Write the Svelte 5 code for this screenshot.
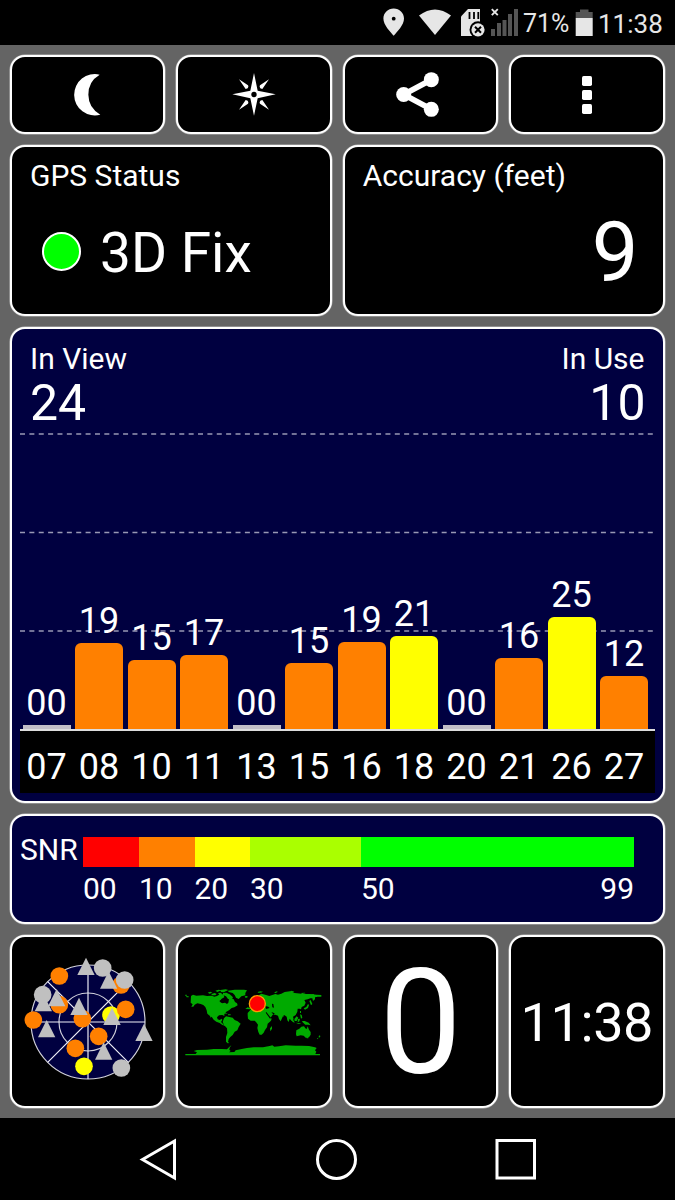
<script lang="ts">
  type Satellite = { id: string; snr: string; height: number; color: string };
  type Marker = { x: number; y: number; color: string; shape: 'circle' | 'triangle' };

  const ORANGE = '#ff8000';
  const YELLOW = '#ffff00';
  const GRAY = '#c0c0c0';

  const satellites: Satellite[] = [
    { id: '07', snr: '00', height: 4.5, color: '#c2bec6' },
    { id: '08', snr: '19', height: 86, color: ORANGE },
    { id: '10', snr: '15', height: 69, color: ORANGE },
    { id: '11', snr: '17', height: 74.5, color: ORANGE },
    { id: '13', snr: '00', height: 4.5, color: '#c2bec6' },
    { id: '15', snr: '15', height: 66, color: ORANGE },
    { id: '16', snr: '19', height: 87, color: ORANGE },
    { id: '18', snr: '21', height: 93.5, color: YELLOW },
    { id: '20', snr: '00', height: 4.5, color: '#c2bec6' },
    { id: '21', snr: '16', height: 71, color: ORANGE },
    { id: '26', snr: '25', height: 112, color: YELLOW },
    { id: '27', snr: '12', height: 53, color: ORANGE }
  ];

  const snrScale = [
    { label: '00', width: 56, color: '#ff0000' },
    { label: '10', width: 55.5, color: ORANGE },
    { label: '20', width: 55.5, color: YELLOW },
    { label: '30', width: 111, color: '#aaff00' },
    { label: '50', width: 273, color: '#00ff00' }
  ];

  // Drawn in order, later markers cover earlier ones
  const markers: Marker[] = [
    { x: 177, y: 139, color: ORANGE, shape: 'circle' },
    { x: 362, y: 166, color: ORANGE, shape: 'circle' },
    { x: 177, y: 225, color: ORANGE, shape: 'circle' },
    { x: 99, y: 271, color: ORANGE, shape: 'circle' },
    { x: 246, y: 267, color: ORANGE, shape: 'circle' },
    { x: 332, y: 256, color: YELLOW, shape: 'circle' },
    { x: 376, y: 239, color: ORANGE, shape: 'circle' },
    { x: 295, y: 320, color: ORANGE, shape: 'circle' },
    { x: 225, y: 356, color: ORANGE, shape: 'circle' },
    { x: 251, y: 410, color: YELLOW, shape: 'circle' },
    { x: 257, y: 111, color: GRAY, shape: 'triangle' },
    { x: 307, y: 115, color: GRAY, shape: 'circle' },
    { x: 325, y: 152, color: GRAY, shape: 'triangle' },
    { x: 373, y: 151, color: GRAY, shape: 'circle' },
    { x: 129, y: 220, color: GRAY, shape: 'triangle' },
    { x: 127, y: 195, color: GRAY, shape: 'circle' },
    { x: 169, y: 205, color: GRAY, shape: 'triangle' },
    { x: 236, y: 231, color: GRAY, shape: 'triangle' },
    { x: 335, y: 261, color: GRAY, shape: 'triangle' },
    { x: 139, y: 298, color: GRAY, shape: 'triangle' },
    { x: 310, y: 365, color: GRAY, shape: 'triangle' },
    { x: 431, y: 309, color: GRAY, shape: 'triangle' },
    { x: 363, y: 415, color: GRAY, shape: 'circle' }
  ];
</script>

<div class="screen">
  <header class="status-bar">
    <svg class="pin" width="22" height="45" viewBox="383 0 22 45">
      <path d="M393.7 8.5c-5.8 0-10.3 4.4-10.3 10.1 0 6.6 7 13.4 10.3 17.2 3.3-3.8 10.3-10.6 10.3-17.2 0-5.7-4.5-10.1-10.3-10.1z" fill="#e6e6e6" />
      <circle cx="393.7" cy="18.7" r="1.9" fill="#000" />
    </svg>
    <svg class="wifi" width="34" height="45" viewBox="418 0 34 45">
      <path d="M419 15.5Q435 3.5 451 15.5L435 35z" fill="#e6e6e6" />
    </svg>
    <svg class="card" width="26" height="45" viewBox="460 0 26 45">
      <path d="M468 9h12v27h-19V16.5z" fill="#e6e6e6" />
      <path d="M469.5 12v7M474 12v7M478.3 12v7" stroke="#000" stroke-width="1.8" />
      <circle cx="478" cy="29.8" r="8.5" fill="#000" />
      <circle cx="478" cy="29.8" r="6.6" fill="#e6e6e6" />
      <path d="M475 26.8l6 6M481 26.8l-6 6" stroke="#000" stroke-width="2" />
    </svg>
    <svg class="signal" width="29" height="45" viewBox="490 0 29 45">
      <path d="M491 29h4v7h-4zM497 23h4v13h-4zM502.5 20h4v16h-4zM508 14h4v22h-4zM514 9h4v27h-4z" fill="#555" />
      <path d="M491.8 9.2l6 6M497.8 9.2l-6 6" stroke="#e6e6e6" stroke-width="1.9" />
    </svg>
    <span class="percent">71%</span>
    <svg class="battery" width="18" height="45" viewBox="575 0 18 45">
      <path d="M580 9.5h8.5V12h4.2v6h-17v-6h4.3z" fill="#555" />
      <path d="M575.7 18h17v18h-17z" fill="#e6e6e6" />
    </svg>
    <span class="clock">11:38</span>
  </header>

  <main>
    <div class="row four">
      <button class="panel tile" aria-label="Night mode">
        <svg width="50" height="50" viewBox="188 75 150 150">
          <path d="M298 89A62 62 0 1 0 300 209A69 69 0 0 1 298 89z" fill="#fff" />
        </svg>
      </button>
      <button class="panel tile" aria-label="Compass">
        <svg width="50" height="50" viewBox="687 75 150 150">
          <path d="M762 84L773 137L827 148L773 160L762 212L751 160L697 148L751 137z" fill="#fff" />
          <path d="M717 103L744 121Q748 130 737 132zM807 103L780 121Q776 130 787 132zM717 194L744 176Q748 167 737 165zM807 194L780 176Q776 167 787 165z" fill="#fff" />
          <circle cx="762" cy="148.5" r="8" fill="#000" />
        </svg>
      </button>
      <button class="panel tile" aria-label="Share">
        <svg width="50" height="50" viewBox="181 75 150 150">
          <path d="M290 104L207 148.5L290 193" fill="none" stroke="#fff" stroke-width="17" />
          <circle cx="207" cy="148.5" r="22.5" fill="#fff" />
          <circle cx="290" cy="104" r="22.5" fill="#fff" />
          <circle cx="290" cy="193" r="22.5" fill="#fff" />
        </svg>
      </button>
      <button class="panel tile" aria-label="Menu">
        <svg width="50" height="50" viewBox="681 75 150 150" fill="#fff">
          <rect x="741" y="93" width="30" height="30" rx="5" />
          <rect x="741" y="135" width="30" height="30" rx="5" />
          <rect x="741" y="177" width="30" height="30" rx="5" />
        </svg>
      </button>
    </div>

    <div class="row two">
      <section class="panel card-panel">
        <h2>GPS Status</h2>
        <div class="fix">
          <span class="led"></span>
          <span>3D Fix</span>
        </div>
      </section>
      <section class="panel card-panel">
        <h2>Accuracy (feet)</h2>
        <div class="accuracy">9</div>
      </section>
    </div>

    <section class="panel navy chart">
      <svg class="grid" width="634" height="200" viewBox="0 0 634 200">
        {#each [1, 99.5, 198] as y}
          <line x1="0" x2="633" y1={y} y2={y} />
        {/each}
      </svg>
      <div class="counts">
        <div>
          <h2>In View</h2>
          <div class="count">24</div>
        </div>
        <div class="right">
          <h2>In Use</h2>
          <div class="count">10</div>
        </div>
      </div>
      <div class="bars">
        {#each satellites as sat}
          <div class="bar-column">
            <span>{sat.snr}</span>
            <div
              class="bar"
              class:flat={sat.snr === '00'}
              style="height: {sat.height}px; background: {sat.color}"
            ></div>
          </div>
        {/each}
      </div>
      <div class="ids">
        {#each satellites as sat}
          <span>{sat.id}</span>
        {/each}
      </div>
    </section>

    <section class="panel navy snr">
      <span class="snr-title">SNR</span>
      <div class="scale">
        {#each snrScale as step}
          <div style="width: {step.width}px">
            <div class="swatch" style="background: {step.color}"></div>
            <span>{step.label}</span>
          </div>
        {/each}
        <span class="scale-end">99</span>
      </div>
    </section>

    <div class="row four">
      <section class="panel tile">
        <svg width="120" height="120" viewBox="83 97 360 360">
          <g fill="none" stroke="#d2d2dc" stroke-width="3.5">
            <circle cx="263" cy="277" r="171" fill="#000040" />
            <circle cx="263" cy="277" r="87" />
          </g>
          <path d="M263 106V448M92 277H434M142 156L384 398M142 398L384 156" stroke="#f0f0f8" stroke-width="3.5" />
          {#each markers as m}
            {#if m.shape === 'circle'}
              <circle cx={m.x} cy={m.y} r="26.5" fill={m.color} />
            {:else}
              <path d="M{m.x} {m.y - 27}l26 52h-52z" fill={m.color} />
            {/if}
          {/each}
        </svg>
      </section>
      <section class="panel tile">
        <svg width="136" height="68" viewBox="34 175 408 204">
          <g fill="#00aa00">
            <path d="M32 195h4v4h-4zM34 199l8 1v3h-6zM49 199l6-4 10 3 20-1 12 2 14-1 8 3 8-2 6-4 4-4 10 4 2 8-8 4-4 8 6 6 8-2 6 4 4-4 2-10 6-4 8 4 4 8 6 4 2 6-10 6-8 2-8 7-8 4-6 7 0 6-6-3-10 1-6 6 2 6 6 2 6-4 2 4-4 6 4 4 4 4 6 0-2 3-8-2-8-6-10-4-8-6-6-9-3 3-2-5-8-7-2-10-4-10-6-6-8-3-10-2-8 4-4 6-6 0 4-7-6-5z" />
            <path d="M99 189l8-3 6 3-8 3zM110 193l10-3 6 3-4 4-10 0zM122 183l10-3 8 2-12 5zM137 181l16-2 8 2-14 7-8-1zM130 190l8-1 4 4-8 2zM145 190l10-1 10 5 10 9-5 8-10-3-6-8-9-4z" />
            <path d="M160 183l20-3 28 0 9 2-5 8 0 7-12 3-8 8-8-4-4-8-6-6-12-3zM210 200l8-1 1 4-6 2zM174 217l6 5-8 1zM141 247l12 2 6 4-12-2zM160 254h8v3h-8z" />
            <path d="M148 266l6-6 10 2 10 2 6 7 9 4 9 7-6 10-4 10-8 4-6 10-7 6-5 6-2 9 4 3-5 1-5-5 0-14 4-12-1-14-9-10-4-9z" />
            <path d="M219 250l8-9 22-2 6 7 8 1 12 0 6 12 10 8-2 6-10 9-2 11-6 8-4 8-6 6-6 0-4-8-3-12 2-10-6-8-4-4-12 0-8-6-1-10zM286 296l6-7 0 8-5 8z" />
            <path d="M228 239l0-10 7-2-2-10 5-6 9-3 5-11 8-5 14 4 10 3 18-6 8 2 10-3 10-5 16-2 14 5 28 3 18 0 20 2 14 1v5h-11l-8 2 0 6-6 5-2-8-6 0-8 3-10 2 4 8-4 9-8 4-2 7-4-2-6 0-1 9-5 10-8 5 2 8-6 5-6-7-3 10-4-5-2-11-6-4-4 0-4 9-4 9-5-7-3-10-8-3-8 0-4 6-9 8-10 4-8-14-4-5-8-4 2-6-10-1-4-7-6-1-2 6-6-6-6-2-7 5z" />
            <path d="M235 210l4-6 4 9-1 6-6 1zM249 187l8-2 8 1-6 3h-9zM299 188l8-3 2 2-8 4zM345 186l6-3 8 3-5 3zM378 190l12-1 3 2-10 2zM410 194h8v3h-8zM404 214l4-3 5 12-4 4zM387 236l8-4 5-9 3 3-3 9-9 5zM376 244h3v6h-3zM323 254l5 5-3 2z" />
            <path d="M345 262l5 2 8 10 2 5-6-2zM359 268l7-8 5 4-5 10-6 0zM370 268l6-1-2 8-5 3zM376 254l5 2 2 8-4 3zM363 279l12 2 5 1-8 1zM382 274l8 0 12 5 6 8-8-2-8 0-8-7z" />
            <path d="M365 302l9-5 6-6 8-1 4 6 4 2 3-8 4 10 5 7 0 8-5 8-10 1-6-6-9-1-12 3-2-6zM396 322h5v4h-5zM427 326l5-2-4 5zM432 319l4-2 1 4-4 3z" />
            <path d="M32 373h31l4-5-10-4 10-3 30-1 20-2 24 0 16 1 6-6 4-4 3-2-5 7-1 6 4 4-5 4 16-1 4-5 18-4 16-3 20-2 28 0 20-4 8-2 6 4 14-1 20-3 30 1 18 0 22 1 18 4 5 2-5 7 4 4-3 7h14v4H32z" />
          </g>
          <path d="M272 229l9 2 4 4-11 3zM292 222l4 1 2 11-5-1zM275 247l14 18-3 2-13-18zM290 247l10 4-3 5zM134 214l8-6 4 8-6 4z" fill="#000" />
          <circle cx="248" cy="222" r="24" fill="#ff0000" stroke="#ff9a00" stroke-width="4" />
        </svg>
      </section>
      <section class="panel tile speed">0</section>
      <section class="panel tile time">11:38</section>
    </div>
  </main>

  <nav>
    <svg width="675" height="82" viewBox="0 0 675 82" fill="none" stroke="#fff" stroke-width="3">
      <path d="M142.5 41.5L174.5 23V60z" />
      <circle cx="336.5" cy="41.5" r="19" />
      <rect x="497" y="22.5" width="37.5" height="37.5" />
    </svg>
  </nav>
</div>

<style>
  :global(body) {
    margin: 0;
    background: #000;
  }

  .screen,
  .screen * {
    box-sizing: border-box;
  }

  .screen {
    width: 675px;
    height: 1200px;
    overflow: hidden;
    background: #000;
    color: #fff;
    font-family: Roboto, 'Liberation Sans', sans-serif;
  }

  svg {
    display: block;
    flex: none;
    overflow: visible;
  }

  .status-bar {
    display: flex;
    height: 45px;
    padding-left: 383px;
    color: #e6e6e6;
    line-height: 48px;
    white-space: nowrap;
  }

  .wifi {
    margin-left: 13px;
  }

  .card {
    margin-left: 8px;
  }

  .signal {
    margin-left: 4px;
  }

  .percent {
    width: 56px;
    padding-left: 4px;
    font-size: 25px;
  }

  .clock {
    padding-left: 5px;
    font-size: 26px;
  }

  main {
    display: grid;
    grid-template-rows: 79px 171px 476px 110px 173px;
    gap: 11px;
    height: 1073px;
    padding: 10px 10.5px 0 10px;
    background: #646464;
  }

  .row {
    display: grid;
    gap: 11px;
  }

  .two {
    grid-template-columns: repeat(2, minmax(0, 1fr));
  }

  .four {
    grid-template-columns: repeat(4, minmax(0, 1fr));
  }

  .panel {
    border: 2px solid #fff;
    border-radius: 15px;
    background: #000;
    box-shadow: 0 0 0 0.5px #ffffff90;
    color: inherit;
    font: inherit;
  }

  .navy {
    background: #000040;
  }

  .tile {
    display: flex;
    align-items: center;
    justify-content: center;
    padding: 0;
  }

  h2 {
    margin: 0;
    font-size: 30px;
    font-weight: 400;
    line-height: 36px;
  }

  .card-panel {
    padding: 11px 18px;
  }

  .fix {
    display: flex;
    align-items: center;
    gap: 19px;
    height: 64px;
    margin-top: 27px;
    padding-left: 12px;
    font-size: 55px;
    line-height: 64px;
  }

  .led {
    width: 39px;
    height: 39px;
    margin-top: -4px;
    border: 2px solid #fff;
    border-radius: 50%;
    background: #00ff00;
  }

  .accuracy {
    margin-top: 11px;
    padding-right: 6px;
    font-size: 83px;
    line-height: 96px;
    text-align: right;
  }

  .chart {
    position: relative;
    display: flex;
    flex-direction: column;
    padding: 12px 8px 8px;
  }

  .grid {
    position: absolute;
    top: 104px;
    left: 8px;
  }

  .grid line {
    stroke: #9898b4;
    stroke-width: 1.7;
    stroke-dasharray: 5 4.37;
  }

  .counts {
    display: flex;
    justify-content: space-between;
    height: 90px;
    padding: 0 10px;
  }

  .count {
    font-size: 50px;
    line-height: 52px;
  }

  .right {
    text-align: right;
  }

  .right .count {
    margin-right: -1px;
  }

  .bars {
    position: relative;
    display: flex;
    flex: 1;
    align-items: flex-end;
    gap: 4.5px;
    padding: 0 2.5px;
  }

  .bar-column {
    width: 48px;
    font-size: 36px;
    line-height: 42px;
    text-align: center;
  }

  .bar-column span {
    display: block;
    margin-bottom: 1px;
  }

  .bar {
    border-radius: 6px 6px 0 0;
  }

  .bar.flat {
    border-radius: 0;
  }

  .ids {
    display: flex;
    gap: 4.5px;
    height: 64px;
    padding: 0 2.5px;
    border-top: 2px solid #ddd;
    background: #000;
    font-size: 36px;
    line-height: 72px;
    text-align: center;
  }

  .ids span {
    width: 48px;
  }

  .snr {
    display: flex;
    padding: 21px 8px 0;
    font-size: 30px;
  }

  .snr-title {
    width: 63px;
    line-height: 26px;
  }

  .scale {
    position: relative;
    display: flex;
    line-height: 44px;
  }

  .swatch {
    height: 30px;
  }

  .scale-end {
    position: absolute;
    top: 30px;
    right: 0;
  }

  .speed {
    padding-top: 2px;
    font-size: 147px;
    line-height: 160px;
  }

  .time {
    padding-top: 2px;
    font-size: 54px;
    letter-spacing: -0.4px;
    white-space: nowrap;
  }

  nav {
    height: 82px;
    background: #000;
  }
</style>
